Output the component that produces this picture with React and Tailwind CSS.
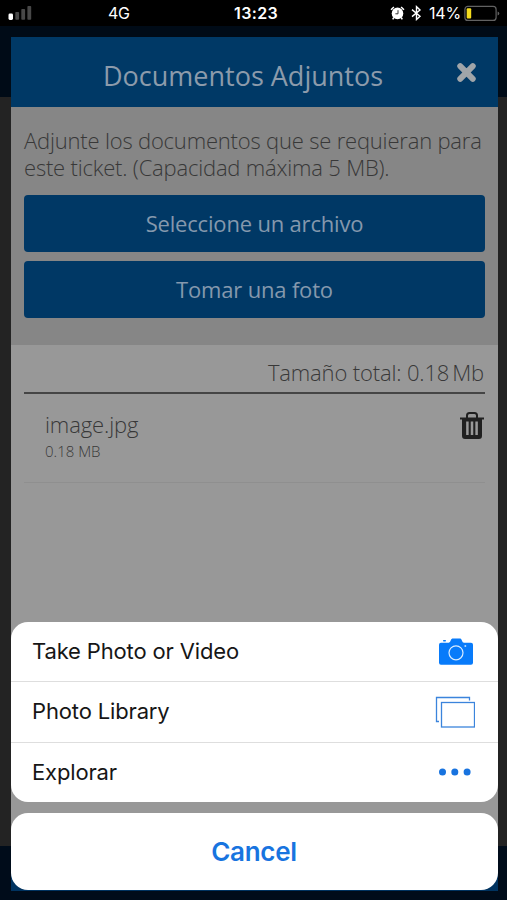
import React from "react";

function StatusBar() {
  return (
    <div className="relative flex h-[26px] shrink-0 items-center bg-black font-['Inter',sans-serif] font-normal text-white">
      <svg className="ml-2 h-[16px] w-6" viewBox="0 0 24 16">
        <rect x="0.5" y="8.5" width="4.5" height="6.5" rx="1.4" fill="#fff" />
        <rect x="7.3" y="7" width="3.8" height="7.8" rx="0.8" fill="#484848" />
        <rect x="13.3" y="4" width="3.8" height="10.8" rx="0.8" fill="#484848" />
        <rect x="19.4" y="1" width="3.8" height="13.8" rx="0.8" fill="#484848" />
      </svg>
      <span className="ml-[76px] w-[126px] text-[16px] tracking-[-0.4px]">4G</span>
      <span className="w-[156px] text-[16px] font-semibold tracking-[0.4px]">13:23</span>
      <svg className="h-4 w-[15px] shrink-0" viewBox="0 0 15 16">
        <circle cx="7.5" cy="8.4" r="5.8" fill="#fff" />
        <path d="M1 4.7 3.9 2M14 4.7 11.1 2" stroke="#fff" strokeWidth="1.5" />
        <path d="M3.8 12.5 2.7 14.3M11.2 12.5l1.1 1.8" stroke="#fff" strokeWidth="1.5" />
        <path d="M8 5.2v3.6H5.4" fill="none" stroke="#333" strokeWidth="1" />
      </svg>
      <svg className="ml-[6px] h-4 w-[11px] shrink-0" viewBox="0 0 11 16">
        <path d="M1 4.6 9 11.2 5.5 14.5V1.7L9 5 1 11.6" fill="none" stroke="#fff" strokeWidth="1.4" />
      </svg>
      <span className="ml-[7px] w-[35px] text-[16px] tracking-[-0.2px]">14%</span>
      <svg className="h-[17px] w-9 shrink-0" viewBox="0 0 36 17">
        <rect x="0.9" y="1.4" width="31.2" height="14" rx="3" fill="none" stroke="#626262" strokeWidth="1.2" />
        <rect x="2.7" y="3.2" width="4.5" height="10.4" rx="1" fill="#f5dc1d" />
        <path d="M33.6 6.4q1.7.5 1.7 2t-1.7 2z" fill="#626262" />
      </svg>
    </div>
  );
}

function DialogHeader() {
  return (
    <div className="flex h-[70px] shrink-0 items-center bg-[#003966] pl-[92px] pt-[9px] text-[#8c9bab]">
      <h1 className="w-[353px] whitespace-nowrap text-[27px] font-normal">Documentos Adjuntos</h1>
      <svg className="-mt-[8px] h-[21px] w-[21px]" viewBox="0 0 20 20">
        <path d="m4 4 12 12M16 4 4 16" stroke="#a0a5a9" strokeWidth="5.6" strokeLinecap="round" />
      </svg>
    </div>
  );
}

function BlueButton({ children }) {
  return (
    <button className="h-[57px] w-full rounded-[4px] bg-[#003865] text-[22px] font-normal tracking-[-0.18px] text-[#8598ad]">
      {children}
    </button>
  );
}

function TrashIcon() {
  return (
    <svg className="mr-px mt-px h-[28px] w-6 shrink-0" viewBox="0 0 24 28">
      <path d="M0 5.5h24v2h-2v16.2q0 3.3-3 3.3H5q-3 0-3-3.3V7.5H0z" fill="#202020" />
      <path d="M7 6V3.6Q7 1 9.5 1h5Q17 1 17 3.6V6" fill="none" stroke="#202020" strokeWidth="2" />
      <path d="M7.4 9.5V23M12 9.5V23M16.6 9.5V23" stroke="#999" strokeWidth="2.5" />
    </svg>
  );
}

function CameraIcon() {
  return (
    <svg className="h-[27px] w-[34px]" viewBox="0 0 34 27">
      <path d="M2 4.7h7.6c1-.1 1.5-.9 2-2C12.2.8 13 .5 14 .5h6.5c1.3 0 2 .6 2.5 2.2.4 1.2 1 1.9 2 2h7q2 0 2 2v18q0 2-2 2H2q-2 0-2-2v-18q0-2 2-2z" fill="#087bfa" />
      <rect x="4" y="2" width="3" height="1.5" rx=".7" fill="#087bfa" />
      <circle cx="17" cy="14.8" r="7" fill="none" stroke="#d8ebff" strokeWidth="1.2" />
      <circle cx="26.3" cy="8.1" r="1" fill="#b8dcff" />
    </svg>
  );
}

function LibraryIcon() {
  return (
    <svg className="h-8 w-10" viewBox="0 0 40 32">
      <path d="M4 25.5H1.5V1.5h33v3" fill="none" stroke="#3b84dc" strokeWidth="1.3" />
      <rect x="6.5" y="6.5" width="33" height="24.5" fill="none" stroke="#3b84dc" strokeWidth="1.3" />
    </svg>
  );
}

function DotsIcon() {
  return (
    <svg className="h-8 w-8" viewBox="0 0 32 32">
      <circle cx="3.5" cy="16" r="3.5" fill="#1873df" />
      <circle cx="15.8" cy="16" r="3.5" fill="#1873df" />
      <circle cx="28.1" cy="16" r="3.5" fill="#1873df" />
    </svg>
  );
}

function ActionSheet() {
  return (
    <div className="absolute left-[11px] top-[622px] w-[487px] font-['Inter',sans-serif] text-[22px] font-normal tracking-[-0.15px] text-[#161616]">
      <div className="flex h-[180px] flex-col divide-y divide-[#dedede] overflow-hidden rounded-[17px] bg-white">
        <div className="flex flex-1 items-center justify-between pl-[21px] pr-[25px]">
          <span>Take Photo or Video</span>
          <CameraIcon />
        </div>
        <div className="flex flex-1 items-center justify-between pl-[21px] pr-[23px]">
          <span>Photo Library</span>
          <LibraryIcon />
        </div>
        <div className="flex flex-1 items-center justify-between pl-[21px] pr-[27px]">
          <span>Explorar</span>
          <DotsIcon />
        </div>
      </div>
      <button className="mt-[11px] h-[77px] w-full rounded-[17px] bg-white pr-px text-[26px] font-semibold tracking-[-0.3px] text-[#1874df]">
        Cancel
      </button>
    </div>
  );
}

export default function App() {
  return (
    <div className="relative flex h-[900px] w-[507px] flex-col overflow-hidden bg-[#232323] font-['Open_Sans',sans-serif] font-light">
      <StatusBar />
      <div className="h-[71px] bg-[#000b17]" />
      <div className="flex-1" />
      <div className="h-[54px] bg-[#000c1a]" />

      <div className="absolute left-[11px] top-[37px] flex h-[854px] w-[487px] flex-col bg-[#989898] text-[#383838]">
        <DialogHeader />
        <div className="flex h-[238px] shrink-0 flex-col gap-[9px] bg-[#868686] px-[13px] pt-[20px]">
          <p className="h-[59px] text-[22px] leading-[27px] tracking-[-0.19px]">
            Adjunte los documentos que se requieran para este ticket. (Capacidad máxima 5 MB).
          </p>
          <BlueButton>Seleccione un archivo</BlueButton>
          <BlueButton>Tomar una foto</BlueButton>
        </div>
        <div className="mx-[13px] flex h-[49px] shrink-0 items-center justify-end border-b-2 border-[#454545] pr-px pt-[7px] text-[22px] tracking-[-0.15px]">
          <span>Tamaño total: 0.18</span>
          <span className="ml-[3px]">Mb</span>
        </div>
        <div className="mx-[13px] flex h-[89px] shrink-0 justify-between border-b border-[#8f8f8f] pl-[21px] pt-[17px]">
          <div>
            <div className="text-[22px] leading-[27px] tracking-[-0.1px]">image.jpg</div>
            <div className="text-[15px] leading-[27px]">0.18 MB</div>
          </div>
          <TrashIcon />
        </div>
        <div className="flex-1" />
        <div className="h-[57px] bg-[#003360]" />
      </div>

      <ActionSheet />
    </div>
  );
}
